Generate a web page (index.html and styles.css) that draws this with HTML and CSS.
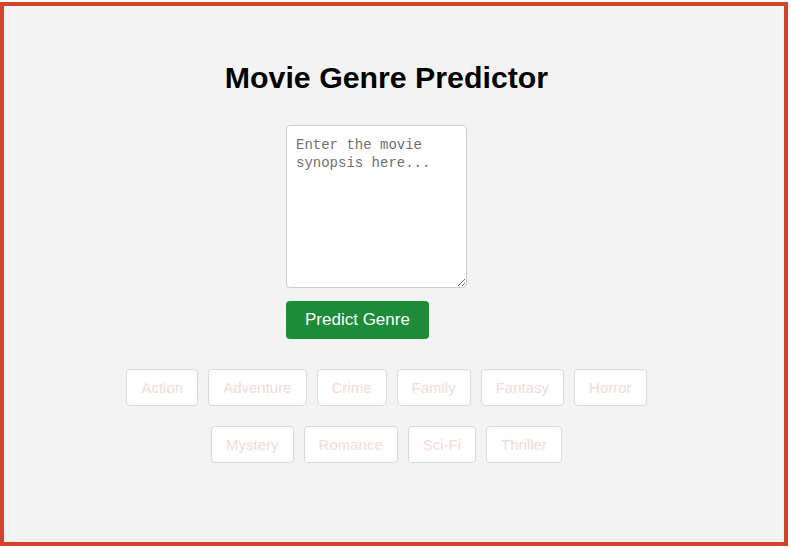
FILE: index.html
```html
<!DOCTYPE html>
<html lang="en">
<head>
<meta charset="utf-8">
<title>Movie Genre Predictor</title>
<link rel="stylesheet" href="styles.css">
</head>
<body>
<div class="frame">
  <main class="app">
    <h1 class="title">Movie Genre Predictor</h1>
    <form class="predict-form">
      <textarea class="synopsis" placeholder="Enter the movie synopsis here..."></textarea>
      <button type="button" class="predict-btn">Predict Genre</button>
    </form>
    <div class="genres">
      <span class="genre">Action</span>
      <span class="genre">Adventure</span>
      <span class="genre">Crime</span>
      <span class="genre">Family</span>
      <span class="genre">Fantasy</span>
      <span class="genre">Horror</span>
      <span class="genre">Mystery</span>
      <span class="genre">Romance</span>
      <span class="genre">Sci-Fi</span>
      <span class="genre">Thriller</span>
    </div>
  </main>
</div>
</body>
</html>
```
FILE: styles.css
```css
html, body {
  margin: 0;
  padding: 0;
  background: #ffffff;
}

.frame {
  box-sizing: border-box;
  width: 788px;
  height: 544px;
  margin-top: 2px;
  border: 4px solid #d2442a;
  background: #f3f3f3;
  font-family: "Liberation Sans", Arial, sans-serif;
}

.app {
  display: flex;
  flex-direction: column;
  align-items: center;
  padding: 54px 15px 0 0;
}

.title {
  margin: 0;
  font-size: 30.3px;
  line-height: 36px;
  font-weight: bold;
  color: #000;
}

.predict-form {
  width: 201px;
  margin-top: 29px;
  display: flex;
  flex-direction: column;
  align-items: flex-start;
}

.synopsis {
  display: block;
  box-sizing: border-box;
  width: 181px;
  height: 163px;
  margin: 0 0 13px 0;
  padding: 10px 9px 8px;
  border: 1px solid #cccccc;
  border-radius: 4px;
  background: #fff;
  font-family: "Liberation Mono", "DejaVu Sans Mono", monospace;
  font-size: 14px;
  line-height: 18px;
  color: #333;
  resize: both;
}

.synopsis::placeholder {
  color: #707070;
}

.predict-btn {
  box-sizing: border-box;
  height: 38px;
  padding: 0 19px;
  border: none;
  border-radius: 4px;
  background: #1d8b37;
  color: #ffffff;
  font-family: "Liberation Sans", Arial, sans-serif;
  font-size: 17px;
  cursor: pointer;
}

.genres {
  width: 560px;
  margin-top: 30px;
  display: flex;
  flex-wrap: wrap;
  justify-content: center;
  gap: 20px 10px;
}

.genre {
  box-sizing: border-box;
  height: 37px;
  padding: 9px 14px;
  border: 1px solid #d9d9d9;
  border-radius: 4px;
  background: #ffffff;
  color: #f5d9d9;
  font-size: 15px;
  line-height: 17px;
}
```
